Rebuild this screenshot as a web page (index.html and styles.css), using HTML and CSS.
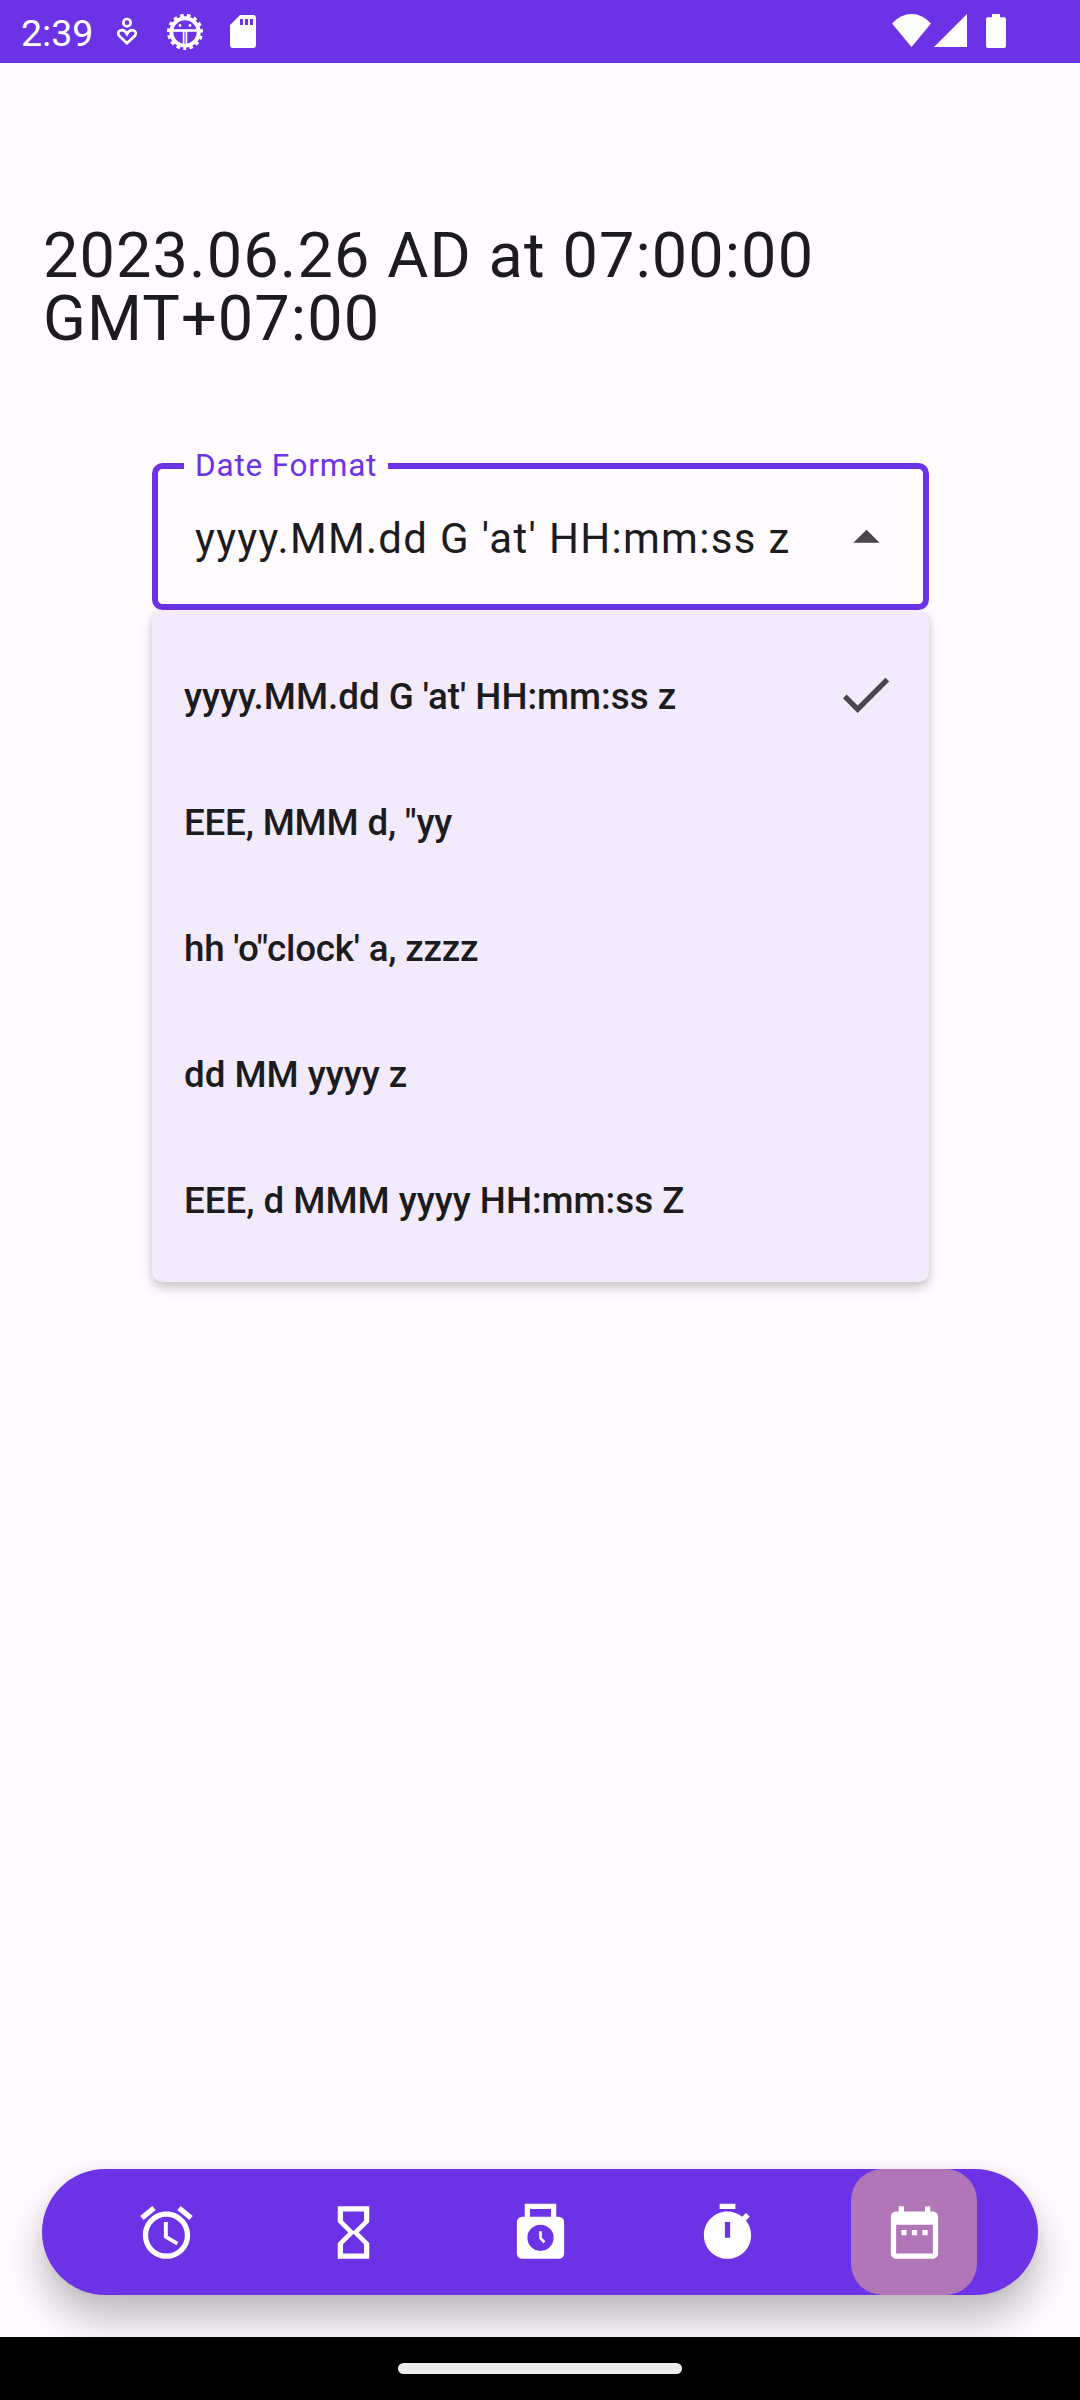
FILE: index.html
```html
<!DOCTYPE html>
<html lang="en">
<head>
<meta charset="utf-8">
<title>Date Format</title>
<link rel="stylesheet" href="styles.css">
</head>
<body>
<div class="screen">
  <header class="status-bar">
    <span class="time">2:39</span>
    <svg class="icon-heart" viewBox="0 0 24 32" fill="none" stroke="#fff" stroke-width="2.700">
      <circle cx="12" cy="6.700" r="3.700"/>
      <path d="M12 27.200L4.400 20.100C2.500 18 3 15.300 5.200 14.500C8 13.400 10.400 15 12 18C13.600 15 16 13.400 18.800 14.500C21 15.300 21.500 18 19.600 20.100Z"/>
    </svg>
    <svg class="icon-gear" viewBox="-19 -19 38 38" fill="none" stroke="#fff">
      <circle r="16" stroke-width="4" stroke-dasharray="3.500 3.202" stroke-dashoffset="1.750" transform="rotate(90)"/>
      <circle r="13.700" stroke-width="4"/>
      <path d="M-13-1.500H13" stroke-width="2.600"/>
      <path d="M-1.400-1V13M1.400-1V13" stroke-width="1.700"/>
      <circle cx="-5" cy="-6.500" r="1.400" fill="#fff" stroke="none"/>
      <circle cx="5" cy="-6.500" r="1.400" fill="#fff" stroke="none"/>
    </svg>
    <svg class="icon-sd" viewBox="0 0 26 33" fill="#fff" fill-rule="evenodd">
      <path d="M10 0H23Q26 0 26 3V30Q26 33 23 33H3Q0 33 0 30V10ZM10 4V10H13V4ZM15 4V10H18V4ZM20 4V10H23V4Z"/>
    </svg>
    <div class="system-icons">
      <svg class="icon-wifi" viewBox="0 0 39 33" fill="#fff"><path d="M0 9.500Q8.500 0 19.500 0T39 9.500L19.500 33Z"/></svg>
      <svg class="icon-signal" viewBox="0 0 33 33" fill="#fff"><path d="M33 0V33H0Z"/></svg>
      <svg class="icon-battery" viewBox="0 0 20 34" fill="#fff"><path d="M6 0H14V3.300H18Q20 3.300 20 5.300V32Q20 34 18 34H2Q0 34 0 32V5.300Q0 3.300 2 3.300H6Z"/></svg>
    </div>
  </header>

  <main class="content">
    <h1 class="date">2023.06.26 AD at 07:00:00 GMT+07:00</h1>
    <div class="dropdown">
      <fieldset class="field">
        <legend class="field-label">Date Format</legend>
        <div class="field-row">
          <span class="field-value">yyyy.MM.dd G 'at' HH:mm:ss z</span>
          <svg class="icon" viewBox="0 0 24 24" fill="#49454e"><path d="M7 14l5-5 5 5z"/></svg>
        </div>
      </fieldset>
      <ul class="menu">
        <li class="menu-item"><span class="menu-text">yyyy.MM.dd G 'at' HH:mm:ss z</span>
          <svg class="icon" viewBox="0 0 24 24" fill="#49454e"><path d="M9 16.170L4.830 12l-1.420 1.410L9 19 21 7l-1.410-1.410z"/></svg></li>
        <li class="menu-item"><span class="menu-text menu-text-tight">EEE, MMM d, "yy</span></li>
        <li class="menu-item"><span class="menu-text menu-text-tight">hh 'o"clock' a, zzzz</span></li>
        <li class="menu-item"><span class="menu-text">dd MM yyyy z</span></li>
        <li class="menu-item"><span class="menu-text">EEE, d MMM yyyy HH:mm:ss Z</span></li>
      </ul>
    </div>
    <nav class="nav">
      <div class="nav-item"><svg class="icon" viewBox="0 0 24 24" fill="#fff"><path d="M22 5.720l-4.600-3.860-1.290 1.530 4.600 3.860L22 5.720zM7.880 3.390L6.600 1.860 2 5.710l1.290 1.530 4.590-3.850zM12.500 8H11v6l4.750 2.850.75-1.230-4-2.370V8zM12 4c-4.970 0-9 4.030-9 9s4.020 9 9 9c4.970 0 9-4.030 9-9s-4.030-9-9-9zm0 16c-3.870 0-7-3.130-7-7s3.130-7 7-7 7 3.130 7 7-3.130 7-7 7z"/></svg></div>
      <div class="nav-item"><svg class="icon" viewBox="0 0 24 24" fill="#fff"><path d="M6 2v6h.01L6 8.010 10 12l-4 4 .01.01H6V22h12v-5.990h-.01L18 16l-4-4 4-3.990-.01-.01H18V2H6zm10 14.500V20H8v-3.500l4-4 4 4zm-4-5l-4-4V4h8v3.500l-4 4z"/></svg></div>
      <div class="nav-item"><svg class="icon" viewBox="0 0 24 24" fill="#fff"><path fill-rule="evenodd" d="M6 1H18V6H19A2 2 0 0 1 21 8V20A2 2 0 0 1 19 22H5A2 2 0 0 1 3 20V8A2 2 0 0 1 5 6H6ZM8 3V6H16V3ZM12 9A5 5 0 1 0 12 19A5 5 0 1 0 12 9Z"/><path d="M12 11.500V14.200L13.500 15.700" fill="none" stroke="#fff"/></svg></div>
      <div class="nav-item"><svg class="icon" viewBox="0 0 24 24" fill="#fff"><path d="M9 1h6v2H9zM19.030 7.390l1.420-1.420c-.45-.51-.9-.97-1.410-1.410L17.620 5.980C16.070 4.740 14.120 4 12 4c-4.970 0-9 4.030-9 9s4.020 9 9 9 9-4.030 9-9c0-2.120-.74-4.070-1.970-5.610zM13 14h-2V8h2v6z"/></svg></div>
      <div class="nav-item nav-item-active"><svg class="icon" viewBox="0 0 24 24" fill="#fff"><path d="M9 11H7v2h2v-2zm4 0h-2v2h2v-2zm4 0h-2v2h2v-2zm2-7h-1V2h-2v2H8V2H6v2H5c-1.110 0-1.990.9-1.990 2L3 20c0 1.100.89 2 2 2h14c1.100 0 2-.9 2-2V6c0-1.100-.9-2-2-2zm0 16H5V9h14v11z"/></svg></div>
    </nav>
  </main>
  <footer class="gesture-bar"><div class="gesture-handle"></div></footer>
</div>
</body>
</html>
```
FILE: styles.css
```css
* { box-sizing: border-box; }

body {
  margin: 0;
  font-family: Roboto, sans-serif;
  color: #1c1b1e;
  background: #fffbff;
}

svg { display: block; flex: none; }

.screen {
  width: 1080px;
  height: 2400px;
  display: flex;
  flex-direction: column;
  overflow: hidden;
}

.status-bar {
  height: 63px;
  flex: none;
  display: flex;
  align-items: flex-start;
  padding-left: 21px;
  background: #6c33e6;
  color: #fff;
}

.time {
  width: 94px;
  font-size: 37.5px;
  line-height: 43px;
  margin-top: 12px;
}

.icon-heart { width: 24px; height: 32px; margin-top: 16px; }
.icon-gear { width: 38px; height: 38px; margin: 13px 0 0 27px; }
.icon-sd { width: 26px; height: 33px; margin: 15px 0 0 26px; }

.system-icons {
  display: flex;
  margin: 14px 74px 0 auto;
}

.icon-wifi { width: 39px; height: 33px; }
.icon-signal { width: 33px; height: 33px; margin-left: 3px; }
.icon-battery { width: 20px; height: 34px; margin-left: 19px; }

.content {
  flex: 1;
  display: flex;
  flex-direction: column;
  padding: 161px 42px 42px;
  overflow: hidden;
}

.date {
  margin: 0;
  padding-left: 1px;
  font-size: 63px;
  font-weight: 400;
  line-height: 63px;
  letter-spacing: 1.1px;
}

.dropdown {
  width: 777px;
  margin: 95px 0 0 110px;
}

.field {
  height: 165px;
  margin: 0;
  padding: 0 25px 0 26px;
  border: 6px solid #6c33e6;
  border-radius: 10.5px;
}

.field-label {
  width: 204px;
  padding: 0 0 0 11px;
  font-size: 31.5px;
  line-height: 42px;
  letter-spacing: 0.8px;
  white-space: nowrap;
  color: #6c33e6;
}

.field-row {
  display: flex;
  justify-content: space-between;
  align-items: center;
  height: 63px;
  margin-top: 19px;
  padding-left: 11px;
}

.field-value {
  padding-top: 2px;
  font-size: 42px;
  line-height: 63px;
  letter-spacing: 1.3125px;
  white-space: nowrap;
}

.icon { width: 63px; height: 63px; }

.menu {
  margin: 0;
  padding: 21px 0;
  list-style: none;
  border-radius: 10.5px;
  background: #f3eafc;
  box-shadow: 0 6px 12px rgba(0, 0, 0, 0.2), 0 0 8px rgba(0, 0, 0, 0.06);
}

.menu-item {
  display: flex;
  justify-content: space-between;
  align-items: center;
  height: 126px;
  padding: 0 32.5px 0 32px;
}

.menu-text {
  padding-top: 5px;
  font-size: 36.75px;
  font-weight: 500;
  line-height: 44px;
  letter-spacing: -0.02px;
  white-space: nowrap;
}

.menu-text-tight { letter-spacing: -0.2px; }

.nav {
  display: flex;
  justify-content: space-between;
  height: 126px;
  margin-top: auto;
  padding: 0 61px;
  border-radius: 63px;
  background: #6c33e6;
  box-shadow: 0 24px 40px rgba(0, 0, 0, 0.26), 0 0 14px rgba(0, 0, 0, 0.05);
}

.nav-item {
  width: 126px;
  display: flex;
  align-items: center;
  justify-content: center;
  border-radius: 31.5px;
}

.nav-item-active { background: #b176b8; }

.gesture-bar {
  height: 63px;
  flex: none;
  display: flex;
  align-items: center;
  justify-content: center;
  background: #000;
}

.gesture-handle {
  width: 284px;
  height: 10.5px;
  border-radius: 6px;
  background: #ececec;
}
```
